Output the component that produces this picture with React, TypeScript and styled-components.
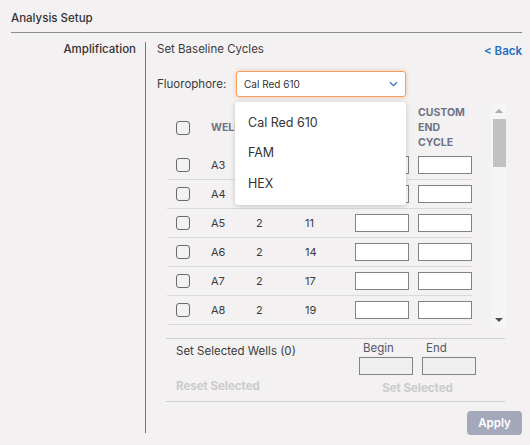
import React from 'react';
import styled, { createGlobalStyle } from 'styled-components';

const GlobalStyle = createGlobalStyle`
  html, body {
    margin: 0;
    padding: 0;
    background: #f3f1f2;
  }
  body {
    font-family: "Inter", "Noto Sans", sans-serif;
    color: #3b3b3b;
  }
  * { box-sizing: border-box; }
`;

const Page = styled.div`
  width: 530px;
  height: 445px;
  padding: 0 8px 0 11px;
`;

const Title = styled.div`
  height: 33px;
  padding-top: 3px;
  display: flex;
  align-items: center;
  font-size: 11.5px;
  font-weight: 500;
  color: #333;
  border-bottom: 1px solid #8a8a8a;
`;

const Body = styled.div`
  display: flex;
  padding-top: 9px;
`;

const SideLabel = styled.div`
  width: 134px;
  padding-right: 9px;
  text-align: right;
  font-size: 11.5px;
  font-weight: 500;
  line-height: 14px;
  color: #333;
`;

const Main = styled.div`
  flex: 1;
  height: 391px;
  border-left: 1px solid #777;
  padding-left: 11px;
  display: flex;
  flex-direction: column;
`;

const HeadRow = styled.div`
  display: flex;
  justify-content: space-between;
  font-size: 11.5px;
  line-height: 14px;
`;

const BackLink = styled.a`
  margin-top: 2px;
  color: #1f6fc5;
  font-weight: 600;
  text-decoration: none;
`;

const FluoroRow = styled.div`
  margin-top: 13px;
  display: flex;
  align-items: center;
  font-size: 11.5px;
`;

const FluoroLabel = styled.span`
  width: 79px;
`;

const SelectWrap = styled.div`
  position: relative;
`;

const SelectBox = styled.div`
  width: 170px;
  height: 26px;
  background: #fff;
  border: 1px solid #f2a062;
  border-radius: 3px;
  box-shadow: 0 0 4px rgba(245, 140, 60, 0.45);
  display: flex;
  align-items: center;
  justify-content: space-between;
  padding: 0 7px 0 7px;
  font-size: 10px;
  color: #333;
`;

const Menu = styled.ul`
  position: absolute;
  top: 31px;
  left: -1px;
  width: 171px;
  margin: 0;
  padding: 5px 0 6px 0;
  list-style: none;
  background: #fff;
  border-radius: 3px;
  box-shadow: 0 1px 5px rgba(0, 0, 0, 0.2);
  z-index: 5;
`;

const MenuItem = styled.li`
  height: 30.5px;
  display: flex;
  align-items: center;
  padding-left: 13px;
  font-size: 12.5px;
  color: #333;
`;

const TableArea = styled.div`
  margin-top: 7px;
  margin-left: 10px;
  height: 224px;
  display: flex;
`;

const Table = styled.div`
  width: 305px;
  overflow: hidden;
`;

const cols = '44px 45px 49px 50px 63px 54px';

const HeaderRow = styled.div`
  display: grid;
  grid-template-columns: ${cols};
  height: 47px;
  align-items: center;
`;

const HeaderCell = styled.div`
  font-size: 10.5px;
  font-weight: 700;
  line-height: 15px;
  color: #6f7485;
  text-transform: uppercase;
`;

const Row = styled.div`
  display: grid;
  grid-template-columns: ${cols};
  height: 29px;
  align-items: center;
  border-bottom: 1px solid #dadada;
  font-size: 11px;
  color: #3b3b3b;
`;

const CheckCell = styled.div`
  padding-left: 9px;
  display: flex;
  align-items: center;
`;

const Check = styled.span`
  width: 14px;
  height: 14px;
  border: 1.5px solid #6a6a6a;
  border-radius: 3px;
  display: inline-block;
`;

const CycleInput = styled.input<{ $muted?: boolean }>`
  width: 54px;
  height: 18px;
  border: 1.5px solid #828282;
  border-radius: 0;
  background: ${(p) => (p.$muted ? '#efefef' : '#fff')};
  padding: 0;
  margin: 0;
  outline: none;
`;

const ScrollBar = styled.div`
  margin-left: 19px;
  width: 15px;
  height: 224px;
  background: #f6f5f5;
  position: relative;
  display: flex;
  flex-direction: column;
  align-items: center;
`;

const Arrow = styled.span<{ $down?: boolean }>`
  width: 0;
  height: 0;
  border-left: 4px solid transparent;
  border-right: 4px solid transparent;
  ${(p) =>
    p.$down
      ? 'border-top: 4px solid #505050; margin-top: auto; margin-bottom: 6px;'
      : 'border-bottom: 4px solid #a8a8a8; margin-top: 5px;'}
`;

const Thumb = styled.span`
  position: absolute;
  top: 15px;
  left: 2px;
  width: 13px;
  height: 48px;
  background: #c1c1c1;
`;

const BottomBox = styled.div`
  margin-top: 10px;
  margin-left: 9px;
  width: 339px;
  border-top: 1px solid #cfcfcf;
  border-bottom: 1px solid #cfcfcf;
  display: grid;
  grid-template-columns: 193px 1fr;
  padding: 2px 0 6px 0;
`;

const BottomLeft = styled.div`
  padding-left: 10px;
  padding-top: 3px;
  display: flex;
  flex-direction: column;
  font-size: 11.5px;
  line-height: 14px;
`;

const MutedAction = styled.span`
  font-weight: 700;
  color: #cbcbcb;
  font-size: 11.5px;
  line-height: 14px;
`;

const ResetAction = styled(MutedAction)`
  margin-top: 21px;
`;

const BottomRight = styled.div`
  width: 117px;
  display: flex;
  flex-direction: column;
  align-items: center;
`;

const RangeRow = styled.div`
  width: 100%;
  display: flex;
  justify-content: space-between;
`;

const RangeField = styled.label`
  display: flex;
  flex-direction: column;
  font-size: 11.5px;
  line-height: 14px;
  color: #555a66;
  span {
    padding-left: 4px;
    margin-bottom: 2px;
  }
`;

const SetSelected = styled(MutedAction)`
  margin-top: 6px;
`;

const Footer = styled.div`
  margin-top: 9px;
  display: flex;
  justify-content: flex-end;
`;

const ApplyButton = styled.button`
  width: 55px;
  height: 24px;
  border: none;
  border-radius: 4px;
  background: #a3a8bb;
  color: #fff;
  font-family: inherit;
  font-size: 11.5px;
  font-weight: 600;
`;

const rows = [
  { well: 'A3', a: '', b: '' },
  { well: 'A4', a: '', b: '' },
  { well: 'A5', a: '2', b: '11' },
  { well: 'A6', a: '2', b: '14' },
  { well: 'A7', a: '2', b: '17' },
  { well: 'A8', a: '2', b: '19' },
];

const Chevron = () => (
  <svg width="9" height="6" viewBox="0 0 9 6">
    <path d="M1 1.2 L4.5 4.6 L8 1.2" fill="none" stroke="#2f6fb8" strokeWidth="1.2" />
  </svg>
);

export default function App() {
  return (
    <Page>
      <GlobalStyle />
      <Title>Analysis Setup</Title>
      <Body>
        <SideLabel>Amplification</SideLabel>
        <Main>
          <HeadRow>
            <span>Set Baseline Cycles</span>
            <BackLink href="#">&lt; Back</BackLink>
          </HeadRow>
          <FluoroRow>
            <FluoroLabel>Fluorophore:</FluoroLabel>
            <SelectWrap>
              <SelectBox>
                <span>Cal Red 610</span>
                <Chevron />
              </SelectBox>
              <Menu>
                <MenuItem>Cal Red 610</MenuItem>
                <MenuItem>FAM</MenuItem>
                <MenuItem>HEX</MenuItem>
              </Menu>
            </SelectWrap>
          </FluoroRow>
          <TableArea>
            <Table>
              <HeaderRow>
                <CheckCell>
                  <Check />
                </CheckCell>
                <HeaderCell>Well</HeaderCell>
                <HeaderCell />
                <HeaderCell />
                <HeaderCell />
                <HeaderCell>
                  Custom
                  <br />
                  End
                  <br />
                  Cycle
                </HeaderCell>
              </HeaderRow>
              {rows.map((r) => (
                <Row key={r.well}>
                  <CheckCell>
                    <Check />
                  </CheckCell>
                  <span>{r.well}</span>
                  <span>{r.a}</span>
                  <span>{r.b}</span>
                  <span>
                    <CycleInput />
                  </span>
                  <span>
                    <CycleInput />
                  </span>
                </Row>
              ))}
            </Table>
            <ScrollBar>
              <Arrow />
              <Thumb />
              <Arrow $down />
            </ScrollBar>
          </TableArea>
          <BottomBox>
            <BottomLeft>
              <span>Set Selected Wells (0)</span>
              <ResetAction>Reset Selected</ResetAction>
            </BottomLeft>
            <BottomRight>
              <RangeRow>
                <RangeField>
                  <span>Begin</span>
                  <CycleInput $muted />
                </RangeField>
                <RangeField>
                  <span>End</span>
                  <CycleInput $muted />
                </RangeField>
              </RangeRow>
              <SetSelected>Set Selected</SetSelected>
            </BottomRight>
          </BottomBox>
          <Footer>
            <ApplyButton>Apply</ApplyButton>
          </Footer>
        </Main>
      </Body>
    </Page>
  );
}
